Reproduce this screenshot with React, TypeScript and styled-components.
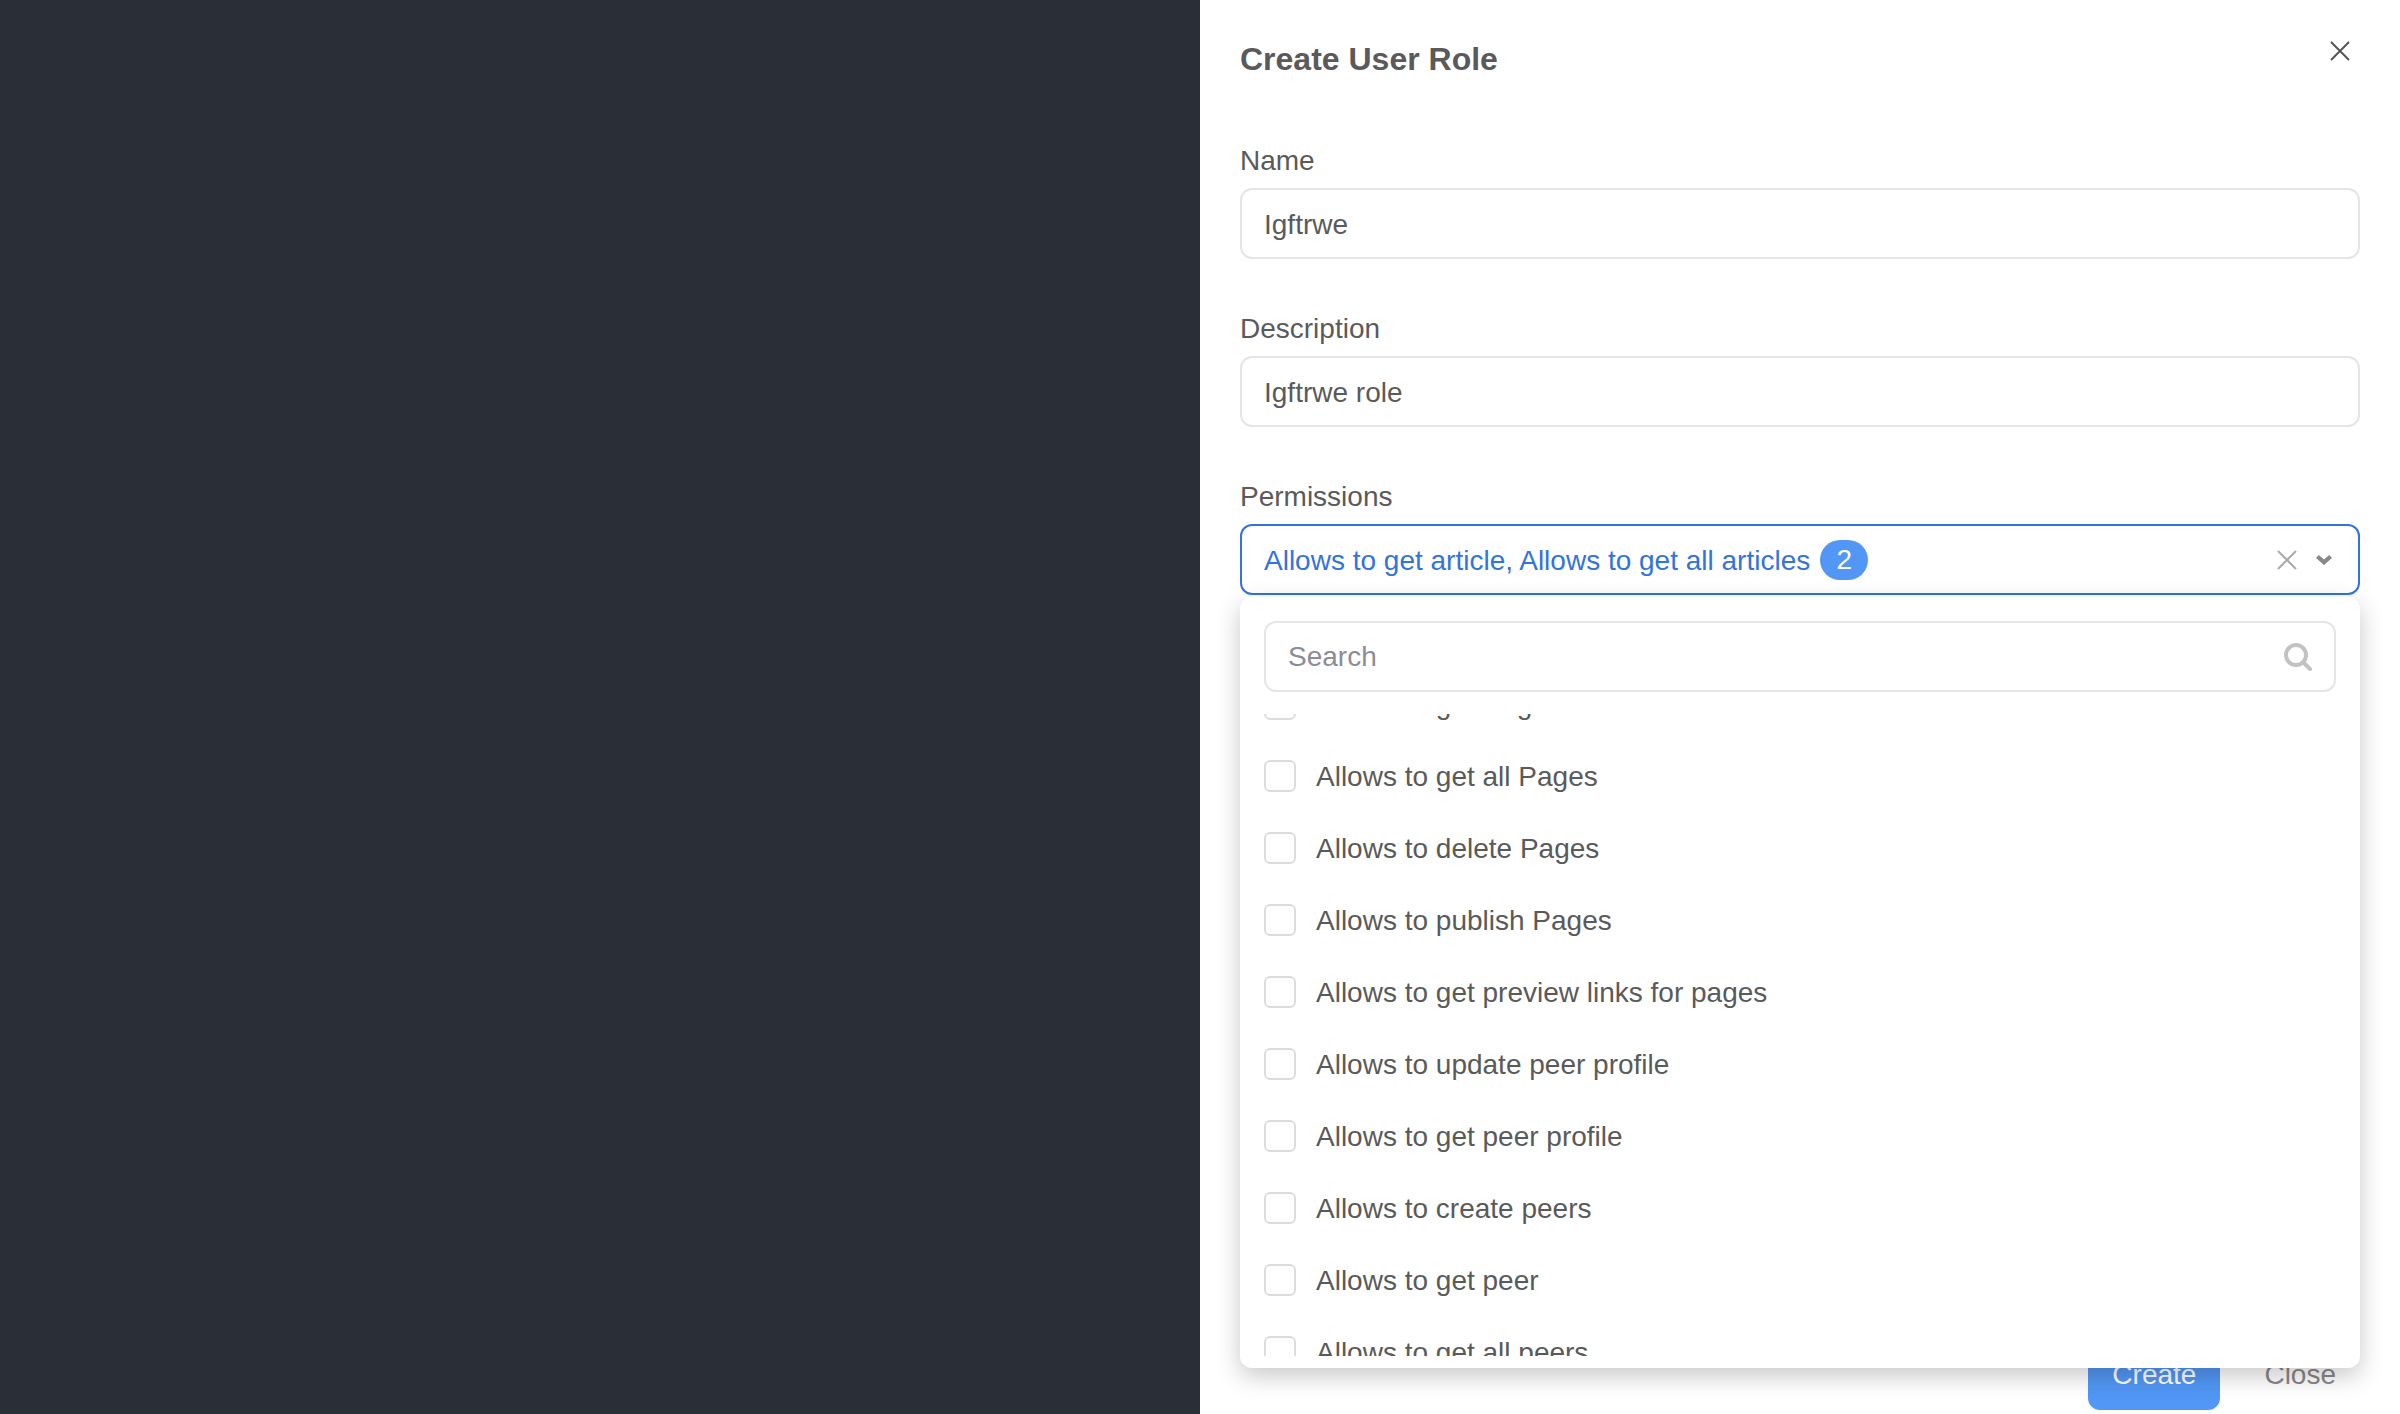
import React, { useLayoutEffect, useRef } from "react";
import styled, { createGlobalStyle } from "styled-components";

const permissions = [
  "Allows to get Pages",
  "Allows to get all Pages",
  "Allows to delete Pages",
  "Allows to publish Pages",
  "Allows to get preview links for pages",
  "Allows to update peer profile",
  "Allows to get peer profile",
  "Allows to create peers",
  "Allows to get peer",
  "Allows to get all peers",
];

const App = () => {
  const listRef = useRef<HTMLDivElement>(null);

  // the list is already scrolled a little in the picture
  useLayoutEffect(() => {
    if (listRef.current) listRef.current.scrollTop = 46;
  }, []);

  return (
    <Page>
      <GlobalStyle />
      <Backdrop />
      <Drawer>
        <Header>
          <Title>Create User Role</Title>
          <CloseIcon viewBox="0 0 20 20">
            <path d="M1 1 19 19M19 1 1 19" />
          </CloseIcon>
        </Header>

        <Field>
          <Label>Name</Label>
          <Input>Igftrwe</Input>
        </Field>
        <Field>
          <Label>Description</Label>
          <Input>Igftrwe role</Input>
        </Field>
        <Field>
          <Label>Permissions</Label>
          <SelectWrap>
            <Select>
              <SelectValue>Allows to get article, Allows to get all articles</SelectValue>
              <Badge>2</Badge>
              <SelectIcons>
                <ClearIcon viewBox="0 0 20 20">
                  <path d="M1 1 19 19M19 1 1 19" />
                </ClearIcon>
                <ChevronIcon viewBox="0 0 16 10">
                  <path d="M0 3 2.8 0 8 4.4 13.2 0 16 3 8 10Z" />
                </ChevronIcon>
              </SelectIcons>
            </Select>

            <Dropdown>
              <SearchBox>
                <Placeholder>Search</Placeholder>
                <SearchIcon viewBox="0 0 28 28">
                  <circle cx="12" cy="12" r="10" />
                  <path d="M19.5 19.5 26 26" />
                </SearchIcon>
              </SearchBox>
              <List ref={listRef}>
                {permissions.map((text) => (
                  <Row key={text}>
                    <Checkbox />
                    <RowText>{text}</RowText>
                  </Row>
                ))}
              </List>
            </Dropdown>
          </SelectWrap>
        </Field>

        <Footer>
          <PrimaryButton>Create</PrimaryButton>
          <GhostButton>Close</GhostButton>
        </Footer>
      </Drawer>
    </Page>
  );
};

const GlobalStyle = createGlobalStyle`
  html, body {
    margin: 0;
    padding: 0;
  }

  body {
    font-family: "Liberation Sans", Arial, sans-serif;
    color: #5a5a5a;
  }
`;

const Page = styled.div`
  display: flex;
  height: 100vh;
  overflow: hidden;
`;

const Backdrop = styled.div`
  flex: 0 0 1200px;
  background-color: #2a2e37;
`;

const Drawer = styled.div`
  flex: 1;
  display: flex;
  flex-direction: column;
  box-sizing: border-box;
  padding: 41px 40px 4px;
  background-color: #fff;
`;

const Header = styled.div`
  display: flex;
  justify-content: space-between;
  align-items: flex-start;
  margin-bottom: 66px;
`;

const Title = styled.div`
  font-size: 32px;
  line-height: 36px;
  font-weight: 700;
`;

const CloseIcon = styled.svg`
  width: 20px;
  height: 20px;
  margin-right: 10px;
  fill: none;
  stroke: #555;
  stroke-width: 2;
`;

const Field = styled.div`
  margin-bottom: 52px;
`;

const Label = styled.div`
  font-size: 28px;
  line-height: 36px;
  margin-bottom: 9px;
`;

const Input = styled.div`
  box-sizing: border-box;
  height: 71px;
  padding: 2px 22px 0;
  display: flex;
  align-items: center;
  font-size: 28px;
  border: 2px solid #e4e4e9;
  border-radius: 12px;
  background-color: #fff;
`;

const SelectWrap = styled.div`
  position: relative;
`;

const Select = styled.div`
  box-sizing: border-box;
  height: 71px;
  padding: 0 22px;
  display: flex;
  align-items: center;
  font-size: 28px;
  border: 2px solid #3273dc;
  border-radius: 12px;
  background-color: #fff;
`;

const SelectValue = styled.span`
  padding-top: 2px;
  color: #3273dc;
`;

const Badge = styled.span`
  width: 48px;
  height: 40px;
  margin-left: 10px;
  display: flex;
  align-items: center;
  justify-content: center;
  border-radius: 20px;
  font-size: 28px;
  color: #fff;
  background-color: #5297f5;
`;

const SelectIcons = styled.div`
  margin-left: auto;
  margin-right: 4px;
  display: flex;
  align-items: center;
  gap: 19px;
`;

const ClearIcon = styled.svg`
  width: 20px;
  height: 20px;
  fill: none;
  stroke: #aaa;
  stroke-width: 2;
`;

const ChevronIcon = styled.svg`
  width: 16px;
  height: 10px;
  fill: #888;
`;

const Dropdown = styled.div`
  position: absolute;
  top: calc(100% + 2px);
  left: 0;
  right: 0;
  height: 771px;
  box-sizing: border-box;
  padding: 24px 24px 12px;
  display: flex;
  flex-direction: column;
  border-radius: 12px;
  background-color: #fff;
  box-shadow: 0 8px 24px rgba(0, 0, 0, 0.22);
  z-index: 10;
`;

const SearchBox = styled.div`
  flex: 0 0 71px;
  box-sizing: border-box;
  padding: 0 22px;
  display: flex;
  align-items: center;
  justify-content: space-between;
  border: 2px solid #e4e4e9;
  border-radius: 12px;
  margin-bottom: 22px;
`;

const Placeholder = styled.span`
  font-size: 28px;
  color: #8c8c94;
`;

const SearchIcon = styled.svg`
  width: 28px;
  height: 28px;
  fill: none;
  stroke: #c2c2c2;
  stroke-width: 4;
  stroke-linecap: round;
`;

const List = styled.div`
  flex: 1;
  overflow: auto;
  scrollbar-width: none;
`;

const Row = styled.div`
  height: 72px;
  display: flex;
  align-items: center;
  gap: 20px;
`;

const Checkbox = styled.span`
  flex: 0 0 32px;
  box-sizing: border-box;
  height: 32px;
  border: 2px solid #dcdcdc;
  border-radius: 6px;
  background-color: #fff;
`;

const RowText = styled.span`
  padding-top: 2px;
  font-size: 28px;
`;

const Footer = styled.div`
  margin-top: auto;
  display: flex;
  justify-content: flex-end;
  gap: 20px;
`;

const PrimaryButton = styled.div`
  height: 70px;
  padding: 0 24px;
  display: flex;
  align-items: center;
  font-size: 28px;
  color: #fff;
  background-color: #5297f5;
  border-radius: 12px;
`;

const GhostButton = styled.div`
  height: 70px;
  padding: 0 24px;
  display: flex;
  align-items: center;
  font-size: 28px;
  color: #888;
`;

export default App;
